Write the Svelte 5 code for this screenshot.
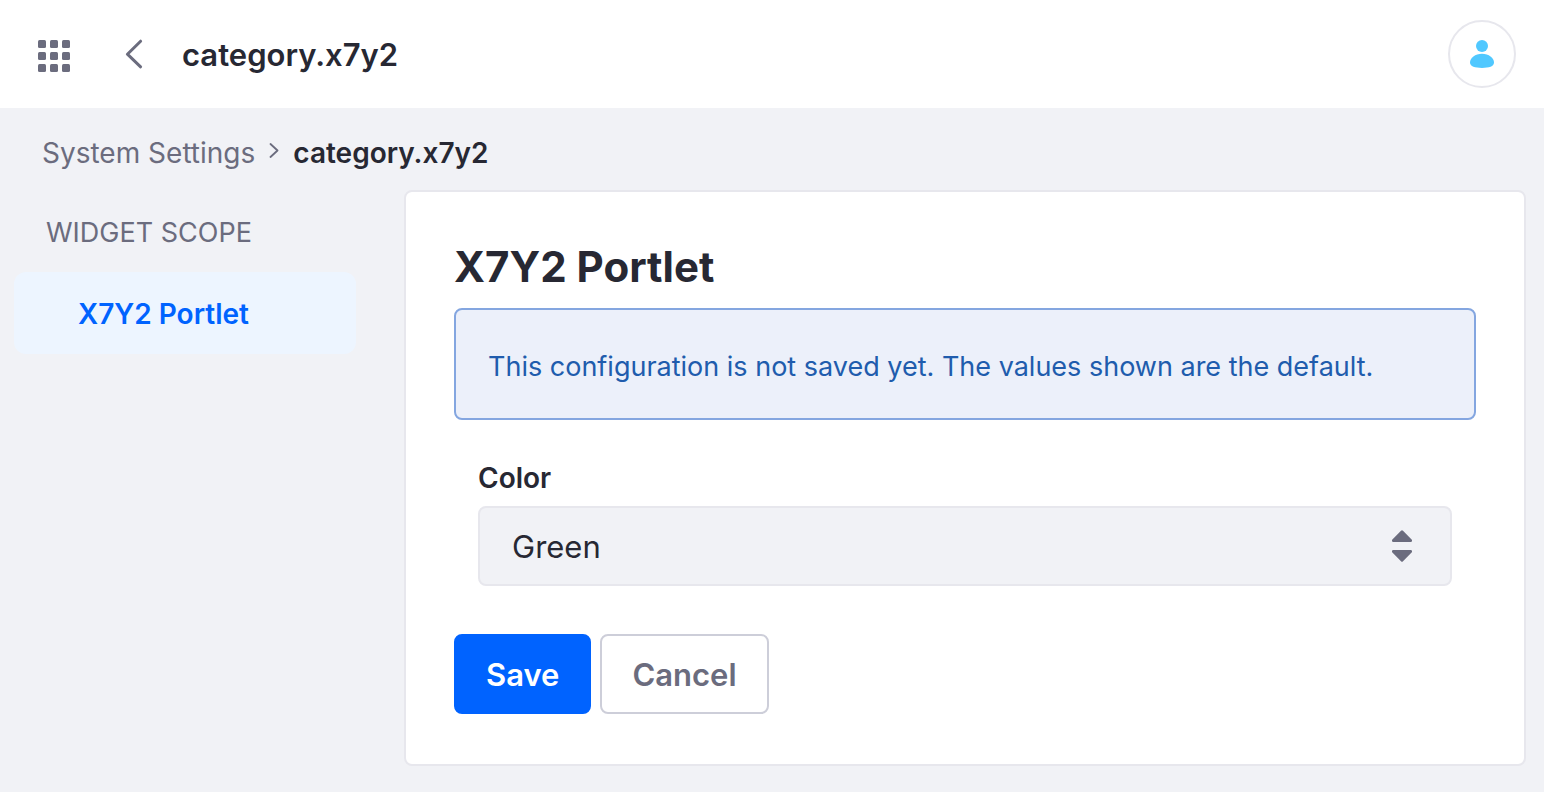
<script>
  let color = $state('green');
  const cells = [0, 12, 24];
</script>

<header class="topbar">
  <button class="icon-button" type="button" aria-label="Applications">
    <svg width="32" height="32" viewBox="0 0 32 32" fill="currentColor" aria-hidden="true">
      {#each cells as y}
        {#each cells as x}
          <rect {x} {y} width="8" height="8" rx="1.5" />
        {/each}
      {/each}
    </svg>
  </button>
  <a class="back" href="#back" aria-label="Back">
    <svg width="18" height="30" viewBox="0 0 18 30" fill="none" stroke="currentColor" stroke-width="3" stroke-linecap="round" stroke-linejoin="round" aria-hidden="true">
      <path d="M15.6 2.2 2.4 15.2 15.6 27.800" />
    </svg>
  </a>
  <h1>category.x7y2</h1>
  <button class="avatar" type="button" aria-label="User profile">
    <svg width="24" height="28" viewBox="0 0 24 28" fill="currentColor" aria-hidden="true">
      <circle cx="12" cy="6" r="6" />
      <path d="M12 13.8C5.2 13.8 0 18 0 22.6 0 26.4 5 28 12 28s12-1.6 12-5.400c0-4.600-5.200-8.800-12-8.800z" />
    </svg>
  </button>
</header>

<nav class="breadcrumb" aria-label="Breadcrumb">
  <a href="#settings">System Settings</a>
  <svg width="10" height="20" viewBox="0 0 10 20" fill="none" stroke="currentColor" stroke-width="1.8" stroke-linecap="round" stroke-linejoin="round" aria-hidden="true">
    <path d="M1.500 1 8.500 7.500 1.500 14" />
  </svg>
  <span aria-current="page">category.x7y2</span>
</nav>

<div class="layout">
  <aside>
    <h2>WIDGET SCOPE</h2>
    <a class="nav-item" href="#portlet">X7Y2 Portlet</a>
  </aside>

  <main>
    <h2>X7Y2 Portlet</h2>
    <div class="alert" role="status">This configuration is not saved yet. The values shown are the default.</div>
    <form onsubmit={(event) => event.preventDefault()}>
      <div class="field">
        <label for="color">Color</label>
        <div class="select">
          <select id="color" bind:value={color}>
            <option value="green">Green</option>
            <option value="red">Red</option>
            <option value="blue">Blue</option>
          </select>
          <svg width="20" height="32" viewBox="0 0 20 32" fill="currentColor" aria-hidden="true">
            <path d="M9 .7a1.400 1.400 0 0 1 2 0l8.600 8.700c.9.900.4 2.600-.7 2.600H1.100C0 12-.5 10.300.4 9.400z" />
            <path d="M9 31.300a1.400 1.400 0 0 0 2 0l8.600-8.700c.9-.9.4-2.600-.7-2.600H1.100C0 20-.5 21.700.4 22.600z" />
          </svg>
        </div>
      </div>
      <div class="actions">
        <button class="primary" type="submit">Save</button>
        <button class="secondary" type="button">Cancel</button>
      </div>
    </form>
  </main>
</div>

<style>
  :global(body) {
    margin: 0;
    background: #f1f2f6;
    color: #272833;
    font-family: Inter, "Liberation Sans", sans-serif;
    font-size: 28px;
    line-height: 42px;
  }

  h1,
  h2 {
    margin: 0;
  }

  a {
    color: inherit;
    text-decoration: none;
  }

  button,
  select {
    box-sizing: border-box;
    font: inherit;
  }

  button {
    cursor: pointer;
  }

  svg {
    display: block;
    flex: none;
  }

  .topbar {
    box-sizing: border-box;
    display: flex;
    align-items: center;
    min-height: 108px;
    padding: 0 28px 0 38px;
    background: #fff;
  }

  .icon-button {
    padding: 4px 0 0;
    border: 0;
    background: none;
    color: #6b6c7e;
  }

  .back {
    margin: 0 39px 0 55px;
    color: #6b6c7e;
  }

  h1 {
    flex: 1;
    padding-top: 2px;
    font-size: 31px;
    font-weight: 600;
    line-height: 48px;
  }

  .avatar {
    display: flex;
    align-items: center;
    justify-content: center;
    width: 68px;
    height: 68px;
    padding: 0;
    border: 2px solid #e7e7ed;
    border-radius: 50%;
    background: #fff;
    color: #50c8ff;
  }

  .breadcrumb {
    display: flex;
    align-items: center;
    gap: 14px;
    padding: 24px 42px 16px;
    color: #6b6c7e;
  }

  .breadcrumb span {
    color: #272833;
    font-weight: 600;
  }

  .layout {
    display: flex;
    align-items: flex-start;
    gap: 48px;
    padding: 0 18px 26px 14px;
  }

  aside {
    flex: 0 0 342px;
    padding-top: 22px;
  }

  aside h2 {
    padding: 0 32px 18px;
    color: #6b6c7e;
    font-size: 27px;
    font-weight: 400;
  }

  .nav-item {
    display: block;
    padding: 21px 64px 19px;
    border-radius: 12px;
    background: #edf5ff;
    color: #0063ff;
    font-weight: 600;
  }

  main {
    box-sizing: border-box;
    flex: 1;
    min-width: 0;
    padding: 49px 48px 50px;
    border: 2px solid #e7e7ed;
    border-radius: 8px;
    background: #fff;
  }

  main h2 {
    padding-bottom: 15px;
    font-size: 42px;
    font-weight: 700;
    line-height: 52px;
  }

  .alert {
    padding: 36px 32px 30px;
    border: 2px solid #84a6e0;
    border-radius: 8px;
    background: #ecf0fa;
    color: #205cad;
    font-size: 27px;
  }

  .field {
    padding: 37px 24px 48px;
  }

  label {
    display: block;
    padding-bottom: 7px;
    font-weight: 600;
  }

  .select {
    display: grid;
    align-items: center;
  }

  .select select,
  .select svg {
    grid-area: 1 / 1;
  }

  .select svg {
    justify-self: end;
    margin-right: 40px;
    color: #6b6c7e;
    pointer-events: none;
  }

  select {
    width: 100%;
    min-height: 80px;
    padding: 2px 80px 0 32px;
    border: 2px solid #e7e7ed;
    border-radius: 8px;
    appearance: none;
    background: #f1f2f6;
    color: #272833;
    font-size: 31px;
  }

  .actions {
    display: flex;
    gap: 9px;
  }

  .actions button {
    min-height: 80px;
    padding: 2px 30px 0;
    border: 2px solid #cdced9;
    border-radius: 8px;
    background: #fff;
    color: #6b6c7e;
    font-size: 31px;
    font-weight: 600;
  }

  .actions .primary {
    border-color: #0063ff;
    background: #0063ff;
    color: #fff;
  }
</style>
